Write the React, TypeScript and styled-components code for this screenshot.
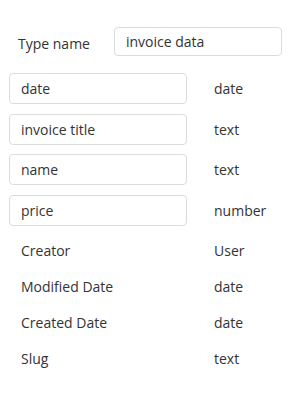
import React from 'react'
import styled, { createGlobalStyle } from 'styled-components'

const GlobalStyle = createGlobalStyle`
  body {
    margin: 0;
    background: #fff;
    font-family: 'Open Sans', 'Liberation Sans', sans-serif;
    color: #333;
  }
`

const Container = styled.div`
  width: 292px;
  height: 400px;
  padding: 27px 0 0 0;
  box-sizing: border-box;
`

const Header = styled.div`
  display: flex;
  align-items: center;
  padding-left: 18px;
  margin-bottom: 17px;
`

const HeaderLabel = styled.div`
  width: 96px;
  font-size: 14px;
  padding-top: 3px;
`

const Input = styled.input<{ wide?: boolean }>`
  box-sizing: border-box;
  width: ${({ wide }) => (wide ? '168px' : '178px')};
  height: ${({ wide }) => (wide ? '29px' : '31px')};
  border: 1px solid #dcdcdc;
  border-radius: 4px;
  padding: 0 10px 0 11px;
  font-family: inherit;
  font-size: 14px;
  color: #333;
  background: #fff;
  outline: none;
`

const FieldList = styled.div`
  display: flex;
  flex-direction: column;
  gap: 9.5px;
  padding-left: 9px;
`

const FieldRow = styled.div`
  display: flex;
  align-items: center;
  height: 31px;
`

const TypeLabel = styled.div`
  margin-left: 27px;
  font-size: 14px;
`

const StaticList = styled.div`
  margin-top: 7px;
`

const StaticRow = styled.div`
  display: flex;
  align-items: center;
  height: 36px;
  padding-left: 21px;
  font-size: 14px;
`

const StaticName = styled.div`
  width: 193px;
`

const fields = [
  { name: 'date', type: 'date' },
  { name: 'invoice title', type: 'text' },
  { name: 'name', type: 'text' },
  { name: 'price', type: 'number' },
]

const builtIns = [
  { name: 'Creator', type: 'User' },
  { name: 'Modified Date', type: 'date' },
  { name: 'Created Date', type: 'date' },
  { name: 'Slug', type: 'text' },
]

function App() {
  return (
    <Container>
      <GlobalStyle />
      <Header>
        <HeaderLabel>Type name</HeaderLabel>
        <Input wide defaultValue="invoice data" />
      </Header>
      <FieldList>
        {fields.map(({ name, type }) => (
          <FieldRow key={name}>
            <Input defaultValue={name} />
            <TypeLabel>{type}</TypeLabel>
          </FieldRow>
        ))}
      </FieldList>
      <StaticList>
        {builtIns.map(({ name, type }) => (
          <StaticRow key={name}>
            <StaticName>{name}</StaticName>
            <div>{type}</div>
          </StaticRow>
        ))}
      </StaticList>
    </Container>
  )
}

export default App
